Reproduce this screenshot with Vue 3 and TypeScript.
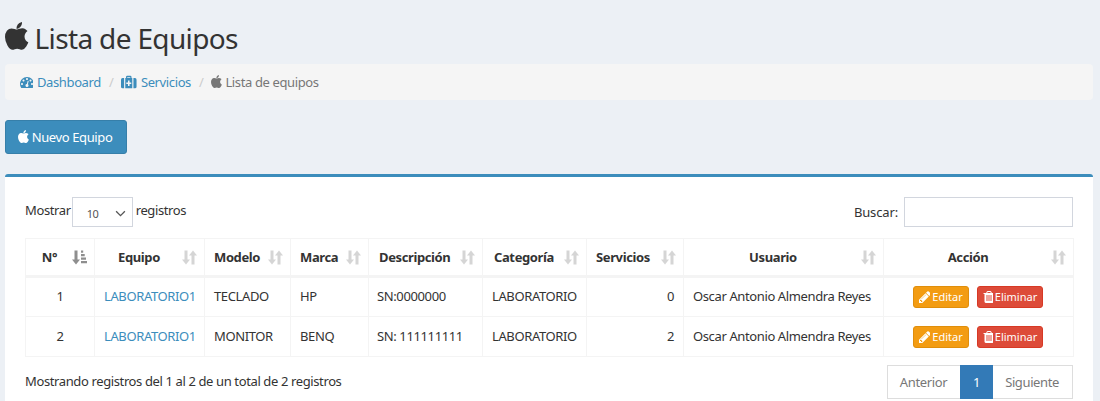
<script setup lang="ts">
const apple = 'M1393 1215q-39 125-123 250-129 196-257 196-49 0-140-32-86-32-151-32-61 0-142 33-81 34-132 34-152 0-301-259-147-261-147-503 0-228 113-374 113-144 284-144 72 0 177 30 104 30 138 30 45 0 143-34 102-34 173-34 119 0 213 65 52 36 104 100-79 67-114 118-65 94-65 207 0 124 69 223t158 126zm-376-1173q0 61-29 136-30 75-93 138-54 54-108 72-37 11-104 17 3-149 78-257 74-107 250-148 1 3 2.5 11t2.5 11q0 4 .5 10t.5 10z'
const pencil = 'M491 1536l91-91-235-235-91 91v107h128v128h107zm523-928q0-22-22-22-10 0-17 7l-542 542q-7 7-7 17 0 22 22 22 10 0 17-7l542-542q7-7 7-17zm-54-192l416 416-832 832h-416v-416zm683 96q0 53-37 90l-166 166-416-416 166-165q36-38 90-38 53 0 91 38l235 234q37 39 37 91z'
const trash = 'M704 1376v-704q0-14-9-23t-23-9h-64q-14 0-23 9t-9 23v704q0 14 9 23t23 9h64q14 0 23-9t9-23zm256 0v-704q0-14-9-23t-23-9h-64q-14 0-23 9t-9 23v704q0 14 9 23t23 9h64q14 0 23-9t9-23zm256 0v-704q0-14-9-23t-23-9h-64q-14 0-23 9t-9 23v704q0 14 9 23t23 9h64q14 0 23-9t9-23zm-544-992h448l-48-117q-7-9-17-11h-317q-10 2-17 11zm928 32v64q0 14-9 23t-23 9h-96v948q0 83-47 143.500t-113 60.500h-832q-66 0-113-58.500t-47-141.500v-952h-96q-14 0-23-9t-9-23v-64q0-14 9-23t23-9h309l70-167q15-37 54-63t79-26h320q40 0 79 26t54 63l70 167h309q14 0 23 9t9 23z'
const gauge = 'M384 1152q0-53-37.500-90.500t-90.500-37.500-90.500 37.500-37.500 90.500 37.500 90.500 90.500 37.500 90.500-37.500 37.500-90.500zm192-448q0-53-37.500-90.500t-90.500-37.500-90.500 37.500-37.500 90.500 37.500 90.500 90.500 37.500 90.500-37.500 37.500-90.500zm428 481l101-382q6-26-7.500-48.500t-38.500-29.500-48 6.500-30 39.500l-101 382q-60 5-107 43.500t-63 98.500q-20 77 20 146t117 89 146-20 89-117q16-60-6-117t-72-91zm660-33q0-53-37.500-90.500t-90.500-37.500-90.500 37.500-37.500 90.500 37.500 90.500 90.500 37.500 90.500-37.500 37.500-90.500zm-640-640q0-53-37.500-90.500t-90.500-37.500-90.500 37.500-37.500 90.500 37.500 90.500 90.500 37.500 90.500-37.500 37.500-90.500zm448 192q0-53-37.500-90.500t-90.500-37.500-90.500 37.500-37.500 90.500 37.500 90.500 90.500 37.500 90.500-37.500 37.500-90.500zm320 448q0 261-141 483-19 29-54 29h-1402q-35 0-54-29-141-221-141-483 0-182 71-348t191-286 286-191 348-71 348 71 286 191 191 286 71 348z'
const medkit = 'M2 4h2v13H2a2 2 0 0 1-2-2V6a2 2 0 0 1 2-2zm3.500 0h1V2.500A1.500 1.500 0 0 1 8 1h4a1.500 1.500 0 0 1 1.500 1.500V4h1v13H5.500V4zm2.500 0h4V2.800H8V4zM9 7v2.500H6.800v2.200H9v2.500h2v-2.500h2.200V9.500H11V7H9zM16 4h2a2 2 0 0 1 2 2v9a2 2 0 0 1-2 2h-2V4z'

const columns = [
  { label: 'N°', width: 69, cls: 'center' },
  { label: 'Equipo', width: 110, cls: 'center' },
  { label: 'Modelo', width: 86, cls: '' },
  { label: 'Marca', width: 78, cls: '' },
  { label: 'Descripción', width: 114, cls: 'nudge1' },
  { label: 'Categoría', width: 104, cls: 'nudge2' },
  { label: 'Servicios', width: 97, cls: '' },
  { label: 'Usuario', width: 200, cls: 'center' },
  { label: 'Acción', width: 190, cls: 'center' },
]
const rows = [
  { n: 1, equipo: 'LABORATORIO1', modelo: 'TECLADO', marca: 'HP', desc: 'SN:0000000', cat: 'LABORATORIO', serv: 0, user: 'Oscar Antonio Almendra Reyes' },
  { n: 2, equipo: 'LABORATORIO1', modelo: 'MONITOR', marca: 'BENQ', desc: 'SN: 111111111', cat: 'LABORATORIO', serv: 2, user: 'Oscar Antonio Almendra Reyes' },
]
</script>

<template>
  <div class="page">
    <h1 class="title">
      <svg class="ic" viewBox="0 0 1408 1792"><path :d="apple" /></svg>
      <span>Lista de Equipos</span>
    </h1>
    <nav class="crumbs">
      <a class="crumb"><svg class="ic" viewBox="0 0 1664 1792"><path :d="gauge" /></svg>Dashboard</a>
      <span class="sep">/</span>
      <a class="crumb"><svg class="ic" viewBox="0 0 20 18"><path fill-rule="evenodd" :d="medkit" /></svg>Servicios</a>
      <span class="sep">/</span>
      <span class="crumb cur"><svg class="ic" viewBox="0 0 1408 1792"><path :d="apple" /></svg>Lista de equipos</span>
    </nav>
    <button class="new"><svg class="ic" viewBox="0 0 1408 1792"><path :d="apple" /></svg>Nuevo Equipo</button>
    <section class="box">
      <div class="controls">
        <label class="len">Mostrar
          <span class="select">10
            <svg viewBox="0 0 12 8" width="11" height="7"><path d="M1 1.500l5 5 5-5" fill="none" stroke="#555" stroke-width="1.500" /></svg>
          </span>
          registros</label>
        <label class="search">Buscar: <input type="text" /></label>
      </div>
      <table>
        <colgroup><col v-for="c in columns" :key="c.label" :style="{ width: c.width + 'px' }" /></colgroup>
        <thead>
          <tr>
            <th v-for="(c, i) in columns" :key="c.label" :class="c.cls">
              <span>{{ c.label }}</span>
              <svg v-if="i === 0" class="sort on" viewBox="0 0 15 14"><path d="M2.500 0h3v9H8l-4 5-4-5h2.500zM9 0h2.200v2.200H9zM9 3.500h3.700v2.200H9zM9 7h5v2.200H9zM9 10.500h6v2.200H9z" /></svg>
              <svg v-else class="sort" viewBox="0 0 15 14"><path d="M2.500 0h3v9H8l-4 5-4-5h2.500zM9.500 14v-9H7l4-5 4 5h-2.500v9z" /></svg>
            </th>
          </tr>
        </thead>
        <tbody>
          <tr v-for="r in rows" :key="r.n">
            <td class="center">{{ r.n }}</td>
            <td class="center eq"><a>{{ r.equipo }}</a></td>
            <td>{{ r.modelo }}</td>
            <td>{{ r.marca }}</td>
            <td class="desc">{{ r.desc }}</td>
            <td>{{ r.cat }}</td>
            <td class="right">{{ r.serv }}</td>
            <td class="center user">{{ r.user }}</td>
            <td class="center">
              <div class="acts">
                <button class="xs warn"><svg class="ic" viewBox="0 0 1536 1792"><path :d="pencil" /></svg>Editar</button>
                <button class="xs danger"><svg class="ic" viewBox="0 0 1408 1792"><path :d="trash" /></svg>Eliminar</button>
              </div>
            </td>
          </tr>
        </tbody>
      </table>
      <div class="foot">
        <div class="info">Mostrando registros del 1 al 2 de un total de 2 registros</div>
        <div class="pager"><a class="prev">Anterior</a><a class="now">1</a><a class="next">Siguiente</a></div>
      </div>
    </section>
  </div>
</template>

<style>
html, body { background: #ecf0f5; overflow: hidden; }
</style>

<style scoped>
* { box-sizing: border-box; }
.page { width: 1100px; height: 401px; padding: 0 7px 0 5px; overflow: hidden; font: 13px/20px "Noto Sans", sans-serif; letter-spacing: -0.38px; color: #333; }
.ic { height: 14px; width: auto; fill: currentColor; flex: none; }
.title { margin: 0; height: 64px; padding-top: 12px; display: flex; align-items: center; gap: 6px; font-size: 28px; line-height: 38px; font-weight: 400; letter-spacing: -0.65px; }
.title .ic { height: 30px; margin-top: -3px; }
.crumbs { height: 36px; background: #f5f5f5; border-radius: 4px; padding: 0 15px; display: flex; gap: 8px; align-items: center; }
.crumb { display: flex; align-items: center; gap: 4px; }
.crumbs a { color: #3c8dbc; }
.sep { color: #ccc; }
.cur { color: #777; gap: 3px; }
button { font: inherit; letter-spacing: inherit; }
.new { display: flex; align-items: center; justify-content: center; gap: 3px; margin-top: 20px; width: 122px; height: 34px; padding: 0 2px 0 0; color: #fff; background: #3c8dbc; border: 1px solid #367fa9; border-radius: 3px; }
.box { margin-top: 20px; height: 260px; background: #fff; border-top: 3px solid #3c8dbc; border-radius: 3px; padding: 20px; }
.controls { display: flex; justify-content: space-between; align-items: flex-start; height: 41px; }
.len { display: flex; align-items: center; gap: 1px; height: 30px; margin-top: -2px; }
.select { width: 61px; height: 30px; border: 1px solid #d2d6de; padding: 3px 6px 0 14px; margin: 3px 2px -1px 0; font-size: 11px; display: flex; justify-content: space-between; align-items: center; color: #555; }
.search { display: flex; align-items: center; gap: 6px; letter-spacing: -0.15px; }
input { width: 169px; height: 30px; border: 1px solid #d2d6de; outline: 0; padding: 0; }
table { width: 1048px; table-layout: fixed; border-collapse: collapse; border: 1px solid #f4f4f4; }
th, td { border: 1px solid #f4f4f4; padding: 0 9px; white-space: nowrap; }
th { height: 38px; border-bottom-width: 3px; position: relative; padding-right: 26px; text-align: left; font-weight: 700; }
th.center { text-align: center; padding-right: 30px; }
th.nudge1 { padding-left: 10px; }
th.nudge2 { padding-left: 11px; }
td { height: 40px; padding-bottom: 2px; }
.center { text-align: center; }
.right { text-align: right; }
td.eq { padding-right: 11px; }
td.desc { padding-left: 8px; }
td.user { padding-right: 13px; }
td a { color: #3c8dbc; }
.sort { position: absolute; right: 7px; top: 11px; width: 15px; height: 15px; fill: #333; opacity: .2; }
.sort.on { opacity: .55; }
.acts { display: flex; justify-content: center; gap: 8px; margin: 2px 2px 0 0; }
.xs { display: flex; align-items: center; justify-content: center; gap: 2px; height: 22px; padding: 0; font-size: 11px; letter-spacing: 0; border-radius: 3px; color: #fff; border: 1px solid; }
.xs .ic { height: 14px; }
.warn { width: 56px; background: #f39c12; border-color: #e08e0b; }
.danger { width: 66px; background: #dd4b39; border-color: #d73925; }
.foot { display: flex; justify-content: space-between; margin-top: 8px; }
.info { padding-top: 6px; }
.pager { display: flex; height: 34px; border: 1px solid #ddd; color: #777; }
.pager a { padding: 6px 12px; }
.pager .prev { padding: 6px 13px 6px 12px; }
.pager .next { padding-right: 13px; }
.pager .now { width: 33px; padding: 7px 0 0; text-align: center; background: #337ab7; color: #fff; margin: -1px 0; }
</style>
